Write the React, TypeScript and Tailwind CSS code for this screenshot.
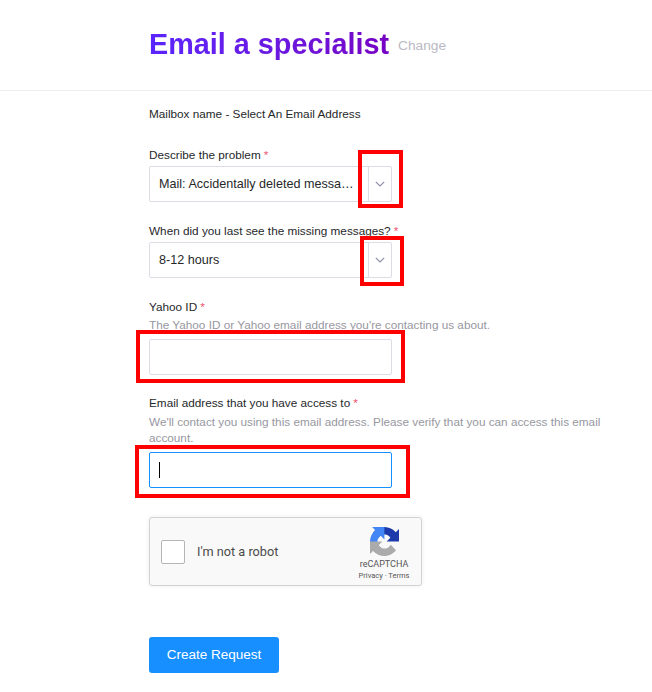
import React from "react";

const Req = () => <span className="text-[#f0506e] ml-[3px]">*</span>;

const Chevron = () => (
  <svg width="10" height="6" viewBox="0 0 10 6" fill="none" stroke="#8f8fa8" strokeWidth="1.2">
    <path d="M0.8 0.8 L5 5 L9.2 0.8" />
  </svg>
);

function Select({ value }: { value: string }) {
  return (
    <div className="flex h-[36px] w-[243px] items-center rounded-[2px] border border-[#dcdce6] bg-white text-[12.6px] text-[#26282a]">
      <div className="min-w-0 flex-1 truncate pl-[9px] pr-[14px]">{value}</div>
      <div className="flex h-full w-[23px] shrink-0 items-center justify-center border-l border-[#dcdce6]">
        <Chevron />
      </div>
    </div>
  );
}

const Mark = ({ className }: { className: string }) => (
  <div className={`absolute border-[4px] border-[#ff0000] ${className}`} />
);

export default function App() {
  return (
    <div className="relative h-[692px] w-[652px] overflow-hidden bg-white font-['Liberation_Sans',Arial,sans-serif] text-[11.75px] text-[#26282a]">
      <header className="flex h-[91px] items-center border-b border-[#eeeef0] pl-[149px] pb-[3px]">
        <h1 className="bg-gradient-to-r from-[#5a24ff] to-[#7600c4] bg-clip-text text-[28.8px] font-bold leading-[36px] text-transparent">
          Email a specialist
        </h1>
        <span className="ml-[9px] mt-[5px] text-[13.7px] text-[#b9b9c4]">Change</span>
      </header>

      <main className="flex flex-col pl-[149px] pr-[40px]">
        <p className="mt-[16px] leading-[14px]">Mailbox name - Select An Email Address</p>

        <label className="mt-[27px] block leading-[14px]">
          Describe the problem
          <Req />
        </label>
        <div className="mt-[4px]">
          <Select value="Mail: Accidentally deleted messages" />
        </div>

        <label className="mt-[22px] block leading-[14px]">
          When did you last see the missing messages?
          <Req />
        </label>
        <div className="mt-[4px]">
          <Select value="8-12 hours" />
        </div>

        <label className="mt-[22px] block leading-[14px]">
          Yahoo ID
          <Req />
        </label>
        <p className="mt-[3px] leading-[16px] text-[#97979f]">The Yahoo ID or Yahoo email address you're contacting us about.</p>
        <input className="mt-[6px] h-[36px] w-[243px] rounded-[2px] border border-[#dcdce6] bg-white outline-none" />

        <label className="mt-[21px] block leading-[14px]">
          Email address that you have access to
          <Req />
        </label>
        <p className="mt-[4px] leading-[16px] text-[#97979f]">
          We'll contact you using this email address. Please verify that you can access this email account.
        </p>
        <div className="mt-[6px] flex h-[36px] w-[243px] items-center rounded-[2px] border border-[#188fff] bg-white pl-[9px]">
          <div className="h-[16px] w-px bg-black" />
        </div>

        <div className="mt-[29px] flex h-[69px] w-[273px] items-center rounded-[3px] border border-[#d3d3d3] bg-[#f9f9f9] shadow-[0_0_4px_rgba(0,0,0,0.08)] font-['Roboto',sans-serif]">
          <div className="ml-[11px] h-[24px] w-[24px] rounded-[2px] border border-[#b5b5b5] bg-white" />
          <span className="ml-[12px] text-[12.7px] text-[#4a4a4a]">I'm not a robot</span>
          <div className="ml-auto mr-[11px] flex w-[52px] flex-col items-center self-start pt-[9px]">
            <svg width="29" height="29" viewBox="0 0 64 64">
              <path d="M64 31.955l-.033-1.37V4.687l-7.16 7.16C50.948 4.674 42.033.093 32.05.093c-10.4 0-19.622 4.96-25.458 12.64l11.736 11.86a15.55 15.55 0 0 1 4.754-5.334c2.05-1.6 4.952-2.906 8.968-2.906.485 0 .86.057 1.135.163 4.976.393 9.288 3.14 11.828 7.124l-8.307 8.307c10.522-.04 22.4-.066 27.295.006" fill="#1c3aa9" />
              <path d="M31.862.094l-1.37.033H4.594l7.16 7.16C4.58 13.147 0 22.06 0 32.046c0 10.4 4.96 19.622 12.64 25.458L24.5 45.768a15.55 15.55 0 0 1-5.334-4.754c-1.6-2.05-2.906-4.952-2.906-8.968 0-.485.057-.86.163-1.135.393-4.976 3.14-9.288 7.124-11.828l8.307 8.307c-.04-10.522-.066-22.4.006-27.295" fill="#4285f4" />
              <path d="M.001 32.045l.033 1.37v25.898l7.16-7.16c5.86 7.173 14.774 11.754 24.76 11.754 10.4 0 19.622-4.96 25.458-12.64l-11.736-11.86a15.55 15.55 0 0 1-4.754 5.334c-2.05 1.6-4.952 2.906-8.968 2.906-.485 0-.86-.057-1.135-.163-4.976-.393-9.288-3.14-11.828-7.124l8.307-8.307c-10.522.04-22.4.066-27.295-.006" fill="#ababab" />
            </svg>
            <div className="mt-[3px] whitespace-nowrap text-[9px] leading-[11px] text-[#555]">reCAPTCHA</div>
            <div className="whitespace-nowrap text-[7.5px] leading-[11px] text-[#555]">Privacy · Terms</div>
          </div>
        </div>

        <button className="mt-[51px] h-[36px] w-[130px] rounded-[3px] bg-[#188fff] text-[13.5px] text-white">Create Request</button>
      </main>

      <Mark className="left-[358px] top-[150px] h-[58px] w-[45px]" />
      <Mark className="left-[360px] top-[236px] h-[50px] w-[44px]" />
      <Mark className="left-[136px] top-[330px] h-[53px] w-[269px]" />
      <Mark className="left-[135px] top-[445px] h-[53px] w-[275px]" />
    </div>
  );
}
